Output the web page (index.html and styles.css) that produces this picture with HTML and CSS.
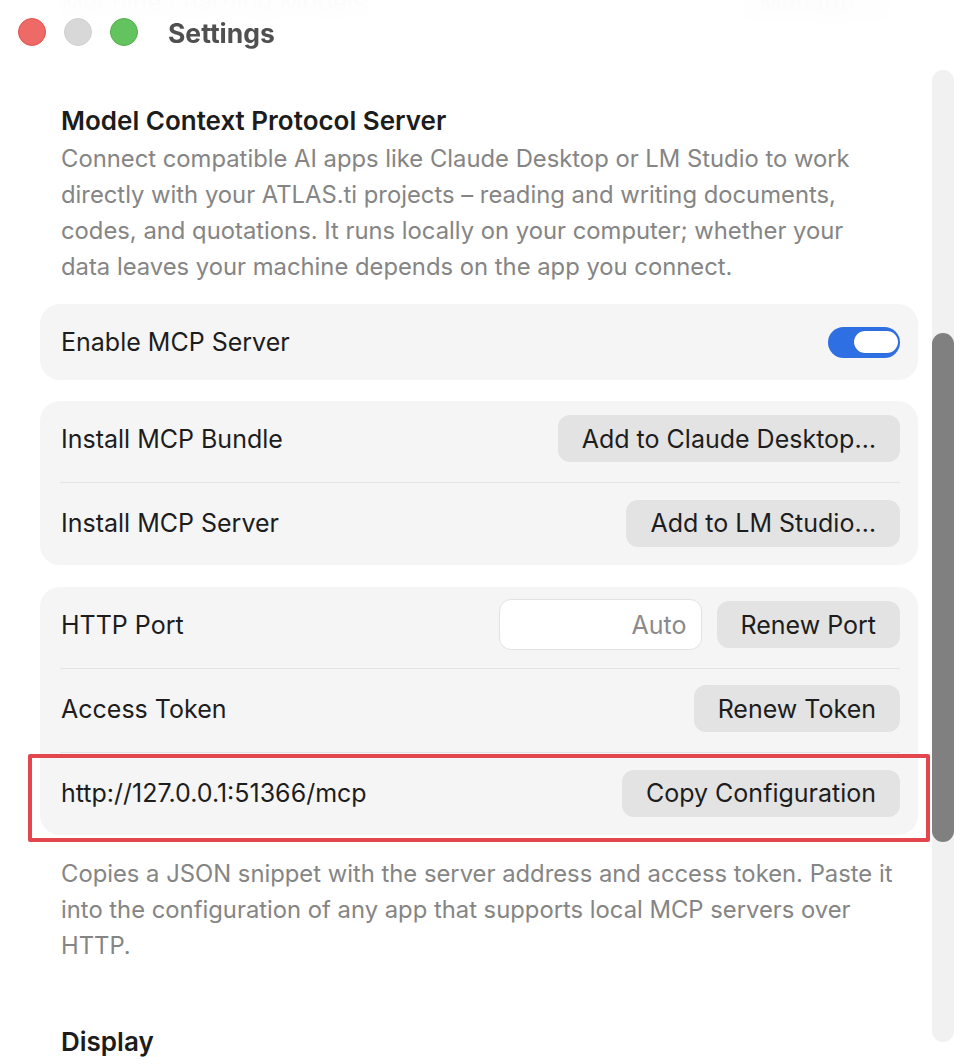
FILE: index.html
```html
<!DOCTYPE html>
<html lang="en">
<head>
  <meta charset="UTF-8" />
  <title>Settings</title>
  <link rel="stylesheet" href="styles.css">
</head>
<body>
  <div class="window">

    <!-- translucent title bar, sits over the scrolled content -->
    <header class="titlebar">
      <div class="lights">
        <span class="light close"></span>
        <span class="light min"></span>
        <span class="light zoom"></span>
      </div>
      <span class="window-title">Settings</span>
    </header>

    <div class="page">
      <main class="content">

        <!-- previous section, scrolled under the title bar -->
        <div class="card ghost">
          <div class="row single">
            <span class="label">Machine Learning Models</span>
            <button class="btn" type="button">Manage…</button>
          </div>
        </div>

        <section class="section">
          <h2 class="section-title">Model Context Protocol Server</h2>
          <p class="desc">Connect compatible AI apps like Claude Desktop or LM Studio to work directly with your ATLAS.ti projects – reading and writing documents, codes, and quotations. It runs locally on your computer; whether your data leaves your machine depends on the app you connect.</p>

          <div class="card">
            <div class="row single">
              <span class="label">Enable MCP Server</span>
              <span class="toggle on" role="switch" aria-checked="true"><span class="knob"></span></span>
            </div>
          </div>

          <div class="card">
            <div class="row">
              <span class="label">Install MCP Bundle</span>
              <button class="btn" type="button">Add to Claude Desktop…</button>
            </div>
            <div class="row">
              <span class="label">Install MCP Server</span>
              <button class="btn" type="button">Add to LM Studio…</button>
            </div>
          </div>

          <div class="card">
            <div class="row">
              <span class="label">HTTP Port</span>
              <div class="controls">
                <input class="field" type="text" placeholder="Auto" />
                <button class="btn" type="button">Renew Port</button>
              </div>
            </div>
            <div class="row">
              <span class="label">Access Token</span>
              <button class="btn" type="button">Renew Token</button>
            </div>
            <div class="row highlighted">
              <span class="label">http://127.0.0.1:51366/mcp</span>
              <button class="btn" type="button">Copy Configuration</button>
            </div>
          </div>

          <p class="desc footnote">Copies a JSON snippet with the server address and access token. Paste it into the configuration of any app that supports local MCP servers over HTTP.</p>
        </section>

        <section class="section">
          <h2 class="section-title">Display</h2>
        </section>
      </main>

      <!-- overlay scrollbar -->
      <div class="scrollbar">
        <div class="thumb"></div>
      </div>
    </div>
  </div>
</body>
</html>
```

FILE: styles.css
```css
/* Reset */
* {
  margin: 0;
  padding: 0;
  box-sizing: border-box;
}

html, body {
  width: 960px;
  height: 1064px;
  overflow: hidden;
  background: #ffffff;
  font-family: Inter, 'Noto Sans', sans-serif;
  color: #1d1d1d;
  -webkit-font-smoothing: antialiased;
}

.window {
  position: relative;
  width: 960px;
  height: 1064px;
  overflow: hidden;
}

/* Title bar */
.titlebar {
  position: absolute;
  top: 0;
  left: 0;
  right: 0;
  height: 64px;
  display: flex;
  align-items: center;
  gap: 30px;
  padding: 0 0 0 18px;
  background: rgba(255, 255, 255, 0.9);
  backdrop-filter: blur(7px);
  z-index: 5;
}

.lights {
  display: flex;
  gap: 18px;
}

.light {
  width: 28px;
  height: 28px;
  border-radius: 50%;
  border: 1px solid transparent;
}

.light.close { background: #ee6a66; border-color: #e0524d; }
.light.min   { background: #d8d8d8; border-color: #cfcfcf; }
.light.zoom  { background: #63c35f; border-color: #4fb24a; }

.window-title {
  font-size: 26.5px;
  font-weight: 700;
  color: #505050;
  margin-top: 2px;
}

/* Page: content column + scrollbar */
.page {
  display: flex;
  align-items: flex-start;
}

.content {
  width: 878px;
  margin-left: 40px;
  margin-top: -36px;
}

.scrollbar {
  width: 22px;
  height: 972px;
  margin: 70px 0 0 14px;
  background: #f1f1f1;
  border-radius: 11px;
}

.thumb {
  width: 22px;
  height: 509px;
  margin-top: 263px;
  background: #808080;
  border-radius: 11px;
}

/* Sections */
.section {
  display: flex;
  flex-direction: column;
}

.section + .section {
  margin-top: 63px;
}

.section-title {
  font-size: 26px;
  font-weight: 600;
  line-height: 30px;
  color: #1c1c1c;
  padding-left: 21px;
}

.desc {
  font-size: 23.8px;
  line-height: 36px;
  color: #858585;
  padding: 0 20px 0 21px;
  margin-top: 5px;
}

.footnote {
  margin-top: 21px;
}

/* Cards */
.card {
  background: #f5f5f5;
  border-radius: 20px;
  padding: 0 18px 0 20px;
  margin-top: 21px;
}

.card + .card + .card {
  margin-top: 22px;
}

.desc + .card {
  margin-top: 19px;
}

.card.ghost {
  margin-top: 0;
  margin-bottom: 66px;
  opacity: 0.3;
  box-shadow: 0 4px 10px rgba(0, 0, 0, 0.06);
}

/* Form rows: content centred in the upper 76px, hairline under it */
.row {
  display: flex;
  align-items: center;
  justify-content: space-between;
  height: 82px;
  padding-bottom: 6px;
  border-bottom: 1px solid #e4e4e4;
}

.row + .row {
  margin-top: 2px;
}

.row:last-child {
  height: 80px;
  padding-bottom: 4px;
  border-bottom: none;
}

.row.single {
  height: 76px;
  padding-bottom: 0;
}

.label {
  font-size: 25px;
  color: #1d1d1d;
  padding-left: 1px;
}

.controls {
  display: flex;
  align-items: center;
  gap: 15px;
}

/* Push buttons */
.btn {
  height: 47px;
  padding: 0 24px;
  border: none;
  border-radius: 12px;
  background: #e3e3e3;
  font-family: inherit;
  font-size: 25px;
  color: #1d1d1d;
  cursor: default;
}

/* Text field */
.field {
  width: 203px;
  height: 51px;
  padding: 0 14px;
  border: 1px solid #e2e2e2;
  border-radius: 12px;
  background: #ffffff;
  font-family: inherit;
  font-size: 25px;
  color: #1d1d1d;
  text-align: right;
  outline: none;
}

.field::placeholder {
  color: #8a8a8a;
}

/* Switch */
.toggle {
  display: flex;
  align-items: center;
  justify-content: flex-end;
  width: 72px;
  height: 31px;
  padding: 0 2px;
  border-radius: 16px;
  background: #2f6fe4;
}

.knob {
  width: 44px;
  height: 22px;
  border-radius: 11px;
  background: #ffffff;
  box-shadow: 0 0 1px rgba(0, 0, 0, 0.35);
}

/* Annotation box around the copy row */
.highlighted {
  position: relative;
}

.highlighted::after {
  content: "";
  position: absolute;
  top: -1px;
  left: -32px;
  right: -30px;
  bottom: -7px;
  border: 4px solid #e3474d;
  border-radius: 2px;
  pointer-events: none;
}
```
